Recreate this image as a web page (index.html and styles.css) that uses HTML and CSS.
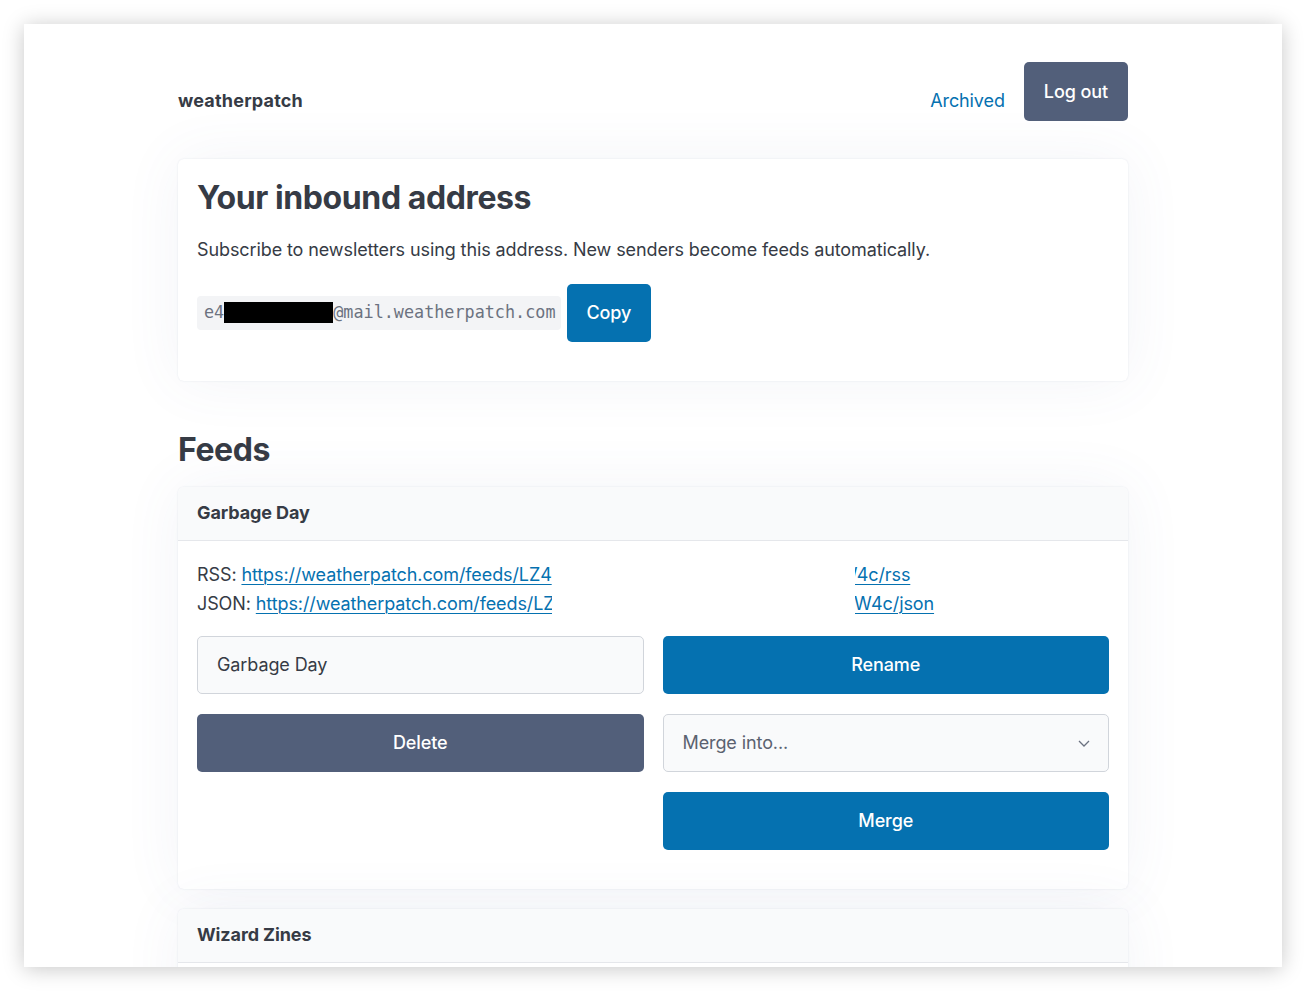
FILE: index.html
```html
<!DOCTYPE html>
<html lang="en">
<head>
  <meta charset="UTF-8">
  <title>weatherpatch</title>
  <link rel="stylesheet" href="styles.css">
</head>
<body>

  <div class="window">
    <div class="page">

      <header class="topbar">
        <span class="brand">weatherpatch</span>
        <nav class="nav">
          <a href="#" class="nav-link">Archived</a>
          <button class="btn btn-slate">Log out</button>
        </nav>
      </header>

      <section class="card inbound">
        <h1>Your inbound address</h1>
        <p>Subscribe to newsletters using this address. New senders become feeds automatically.</p>
        <div class="address-row">
          <code class="address">e4<span class="redacted"></span>@mail.weatherpatch.com</code>
          <button class="btn btn-blue">Copy</button>
        </div>
      </section>

      <h2 class="section-title">Feeds</h2>

      <section class="card feed">
        <div class="feed-head">Garbage Day</div>
        <div class="feed-body">
          <div class="feed-links">
            <div>RSS: <a href="#">https://weatherpatch.com/feeds/LZ4<span class="id-gap"></span>W4c/rss</a></div>
            <div>JSON: <a href="#">https://weatherpatch.com/feeds/LZ4<span class="id-gap"></span>W4c/json</a></div>
            <div class="id-mask"></div>
          </div>
          <div class="feed-form">
            <input type="text" class="field" value="Garbage Day">
            <button class="btn btn-blue">Rename</button>
            <button class="btn btn-slate">Delete</button>
            <div class="select-wrap">
              <select class="field">
                <option>Merge into...</option>
              </select>
              <svg class="chevron" width="12" height="7" viewBox="0 0 12 7"><path d="M1 1l5 5 5-5" fill="none" stroke="#6b7280" stroke-width="1.3"/></svg>
            </div>
            <span></span>
            <button class="btn btn-blue">Merge</button>
          </div>
        </div>
      </section>

      <section class="card feed">
        <div class="feed-head">Wizard Zines</div>
        <div class="feed-body"></div>
      </section>

    </div>
  </div>

</body>
</html>
```

FILE: styles.css
```css
* {
  box-sizing: border-box;
}

body {
  margin: 0;
  padding: 24px;
  background: #ffffff;
  font-family: Inter, "Noto Sans", sans-serif;
  color: #363b45;
}

.window {
  height: 943px;
  overflow: hidden;
  background: #ffffff;
  box-shadow: 0 2px 20px rgba(0, 0, 0, 0.22);
}

.page {
  width: 950px;
  margin: 0 auto;
  padding-top: 38px;
  font-size: 18px;
  line-height: 1.6;
  letter-spacing: -0.1px;
}

.topbar {
  display: flex;
  justify-content: space-between;
  align-items: flex-end;
  margin-bottom: 38px;
}
.brand {
  font-weight: 700;
  letter-spacing: 0.2px;
  margin-bottom: 5px;
}
.nav {
  display: flex;
  align-items: flex-end;
  gap: 19px;
}
.nav-link {
  color: #0571b0;
  text-decoration: none;
  margin-bottom: 5px;
}

.btn {
  font-family: inherit;
  font-size: 18px;
  font-weight: 500;
  letter-spacing: -0.1px;
  color: #ffffff;
  border: none;
  border-radius: 5px;
  padding: 0 20px;
  height: 59px;
  cursor: pointer;
}
.btn-blue {
  background: #0571b0;
}
.btn-slate {
  background: #525f7a;
}

.card {
  background: #ffffff;
  border-radius: 6px;
  box-shadow: 0 0 2px rgba(60, 70, 110, 0.12), 0 0 60px rgba(90, 100, 160, 0.07);
}

.inbound {
  padding: 20px 19px 39px;
}
.inbound h1 {
  margin: 0;
  font-size: 32px;
  line-height: 38px;
  font-weight: 700;
  letter-spacing: -0.4px;
}
.inbound p {
  margin: 19px 0;
}
.address-row {
  display: flex;
  align-items: center;
  gap: 6px;
}
.address {
  display: inline-flex;
  align-items: center;
  height: 34px;
  padding: 0 5px 0 7px;
  background: #f3f4f6;
  border-radius: 4px;
  font-family: "DejaVu Sans Mono", monospace;
  font-size: 16.8px;
  letter-spacing: 0;
  color: #6b7280;
}
.redacted {
  display: inline-block;
  width: 109px;
  height: 21px;
  background: #000000;
}
.address-row .btn {
  height: 58px;
}

.section-title {
  margin: 50px 0 18px;
  font-size: 32px;
  line-height: 38px;
  font-weight: 700;
  letter-spacing: -0.4px;
}

.feed {
  margin-bottom: 20px;
  overflow: hidden;
}
.feed-head {
  padding: 12px 19px 13px;
  background: #f9fafb;
  border-bottom: 1px solid #e5e7eb;
  font-weight: 700;
  line-height: 28px;
}
.feed-body {
  padding: 19px 19px 39px;
}
.feed-links {
  position: relative;
  line-height: 29px;
  margin-bottom: 18px;
  white-space: nowrap;
}
.feed-links a {
  color: #0571b0;
  text-decoration: underline;
  text-underline-offset: 3px;
  text-decoration-thickness: 1px;
}
.id-gap {
  display: inline-block;
  width: 288px;
}
.id-mask {
  position: absolute;
  top: 0;
  bottom: 0;
  left: 355px;
  width: 303px;
  background: #ffffff;
}

.feed-form {
  display: grid;
  grid-template-columns: 1fr 1fr;
  grid-auto-rows: 58px;
  gap: 20px 19px;
}
.feed-form .btn {
  height: 58px;
}
.field {
  width: 100%;
  height: 58px;
  padding: 0 19px;
  font-family: inherit;
  font-size: 18px;
  letter-spacing: -0.1px;
  color: #363b45;
  background: #f9fafb;
  border: 1px solid #d1d5db;
  border-radius: 5px;
}
select.field {
  appearance: none;
  color: #5b6270;
}
.select-wrap {
  position: relative;
}
.chevron {
  position: absolute;
  right: 19px;
  top: 26px;
}
```
